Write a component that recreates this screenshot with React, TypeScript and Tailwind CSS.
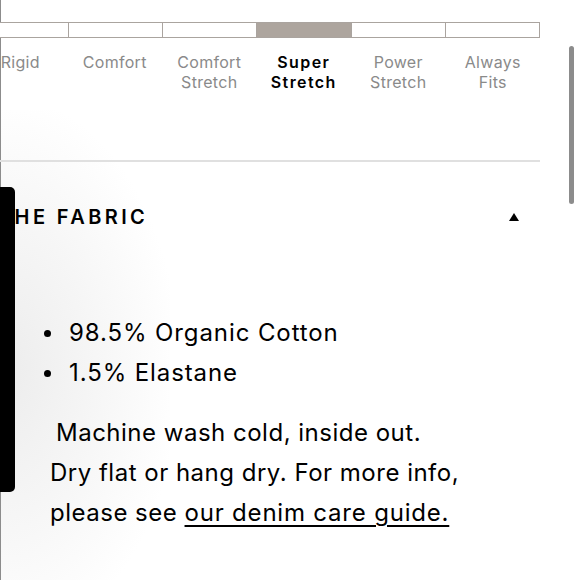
import React from 'react'

const levels = [
  { top: 'Rigid', bottom: '' },
  { top: 'Comfort', bottom: '' },
  { top: 'Comfort', bottom: 'Stretch' },
  { top: 'Super', bottom: 'Stretch', active: true },
  { top: 'Power', bottom: 'Stretch' },
  { top: 'Always', bottom: 'Fits' },
]

const App = () => {
  return (
    <div className="relative h-[580px] w-[580px] overflow-hidden bg-white font-['Inter',sans-serif] text-black">
      {/* soft shadow on the left edge */}
      <div className="pointer-events-none absolute left-0 top-[110px] h-[520px] w-[170px] bg-[radial-gradient(ellipse_at_left,#ececec_0%,#f6f6f6_40%,transparent_75%)]" />
      <div className="absolute left-0 top-0 h-full w-[1px] bg-[#8c8c8c]" />

      <div className="relative ml-[-27px] w-[567px]">
        {/* stretch scale */}
        <div className="mt-[22px] grid h-[16px] grid-cols-6 border border-[#aaa49f]">
          {levels.map((l, i) => (
            <div
              key={i}
              className={`h-full ${i > 0 ? 'border-l border-[#aaa49f]' : ''} ${l.active ? 'bg-[#ada59e]' : 'bg-white'}`}
            />
          ))}
        </div>
        <div className="mt-[14px] grid grid-cols-6">
          {levels.map((l, i) => (
            <div
              key={i}
              className={`flex flex-col items-center text-[16px] leading-[20px] ${
                l.active ? 'font-semibold tracking-[1.4px] text-black' : 'text-[#8a8a8a] tracking-[0.3px]'
              }`}
            >
              <span>{l.top}</span>
              {l.bottom && <span>{l.bottom}</span>}
            </div>
          ))}
        </div>

        <div className="mt-[68px] h-[2px] bg-[#e0e0e0]" />

        {/* accordion header */}
        <div className="mt-[41px] flex items-center justify-between pl-[25px] pr-[21px]">
          <span className="text-[20px] font-semibold leading-[28px] tracking-[3.4px]">THE FABRIC</span>
          <svg width="10" height="8" viewBox="0 0 10 8">
            <polygon points="5,0 10,8 0,8" fill="#000" />
          </svg>
        </div>

        {/* accordion body */}
        <ul className="mt-[82px] pl-[71px] text-[24px] leading-[40px] tracking-[0.9px]">
          <li className="flex items-center gap-[18px]">
            <span className="h-[7px] w-[7px] rounded-full bg-black" />
            <span>98.5% Organic Cotton</span>
          </li>
          <li className="flex items-center gap-[18px]">
            <span className="h-[7px] w-[7px] rounded-full bg-black" />
            <span>1.5% Elastane</span>
          </li>
        </ul>
        <p className="mt-[20px] pl-[77px] text-[24px] leading-[40px] tracking-[0.5px]">
          <span className="pl-[6px]">Machine wash cold, inside out.</span>
          <br />
          Dry flat or hang dry. For more info,
          <br />
          please see{' '}
          <span className="underline decoration-[1.5px] underline-offset-[4px] tracking-[0.8px]">our denim care guide.</span>
        </p>
      </div>

      {/* overlays */}
      <div className="absolute left-0 top-[187px] h-[305px] w-[15px] rounded-r-[5px] bg-black" />
      <div className="absolute left-[569px] top-[46px] h-[158px] w-[5px] rounded-full bg-[#8c8c8c]" />
    </div>
  )
}

export default App
